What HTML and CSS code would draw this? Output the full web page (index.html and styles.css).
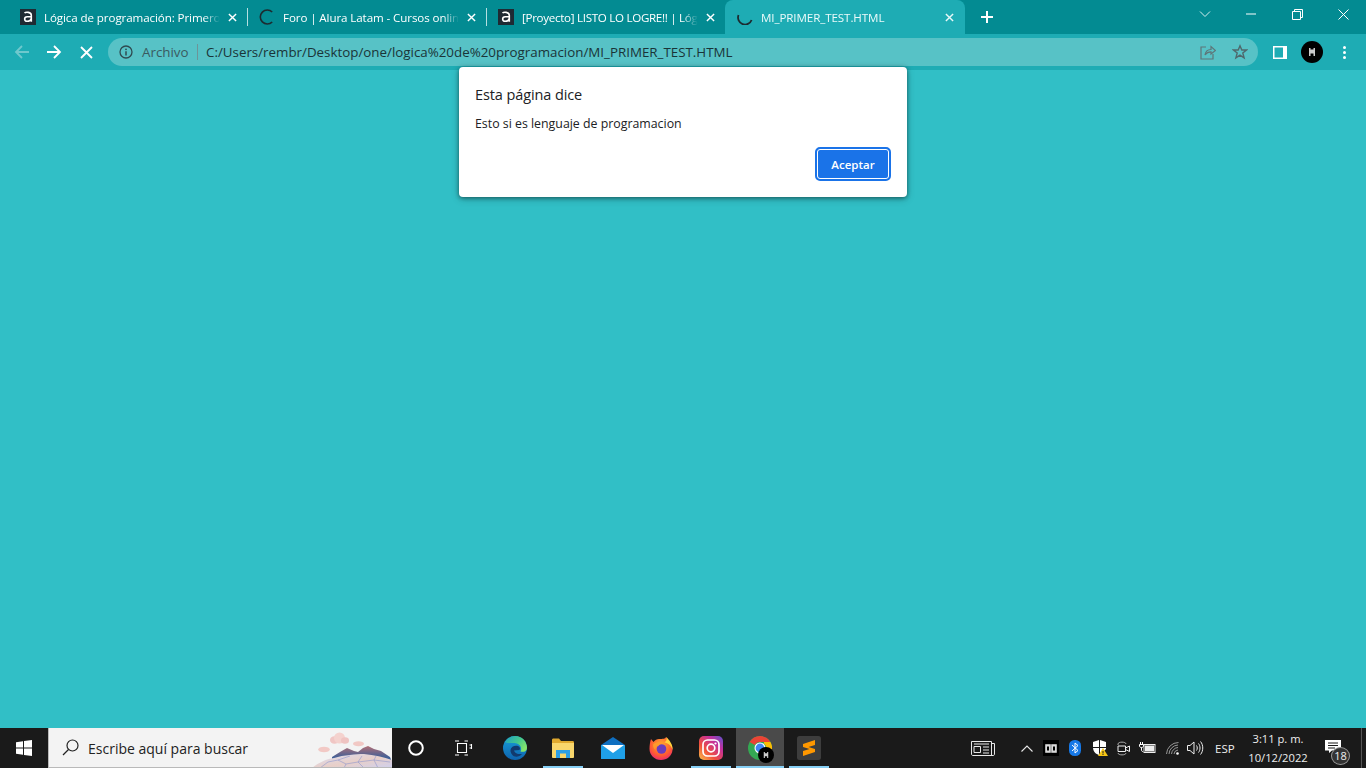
FILE: index.html
```html
<!DOCTYPE html>
<html lang="es">
<head>
<meta charset="utf-8">
<title>MI_PRIMER_TEST.HTML</title>
<link rel="stylesheet" href="styles.css">
</head>
<body>
<div class="browser">
  <div class="tabstrip">
    <div class="tab sep">
      <svg class="fav" viewBox="0 0 16 16"><rect width="16" height="16" fill="#1f2a33"/><path d="M4.500 4C5.500 3 11.300 2.500 11.300 6.200V12.800M11.300 7.700H7.200C3.800 7.700 3.800 12.300 7.200 12.300C9 12.300 10.700 11.300 11.300 9.500" fill="none" stroke="#fff" stroke-width="1.600"/></svg>
      <span class="title">Lógica de programación: Primeros pasos</span>
      <svg class="tclose" viewBox="0 0 10 10"><path d="M1 1L9 9M9 1L1 9" stroke="#fff" stroke-width="1.600"/></svg>
    </div>
    <div class="tab sep">
      <svg class="fav" viewBox="0 0 16 16"><path d="M13.200 3A7 7 0 1 0 13.200 13" fill="none" stroke="#1d2b30" stroke-width="1.600"/></svg>
      <span class="title">Foro | Alura Latam - Cursos online de tecnología</span>
      <svg class="tclose" viewBox="0 0 10 10"><path d="M1 1L9 9M9 1L1 9" stroke="#fff" stroke-width="1.600"/></svg>
    </div>
    <div class="tab">
      <svg class="fav" viewBox="0 0 16 16"><rect width="16" height="16" fill="#1f2a33"/><path d="M4.500 4C5.500 3 11.300 2.500 11.300 6.200V12.800M11.300 7.700H7.200C3.800 7.700 3.800 12.300 7.200 12.300C9 12.300 10.700 11.300 11.300 9.500" fill="none" stroke="#fff" stroke-width="1.600"/></svg>
      <span class="title caps">[Proyecto] LISTO LO LOGRE!! | Lógica de programación</span>
      <svg class="tclose" viewBox="0 0 10 10"><path d="M1 1L9 9M9 1L1 9" stroke="#fff" stroke-width="1.600"/></svg>
    </div>
    <div class="tab active">
      <svg class="fav" viewBox="0 0 16 16"><path d="M1.500 6A7 7 0 0 0 14.600 11" fill="none" stroke="#1d2b30" stroke-width="1.800"/></svg>
      <span class="title">MI_PRIMER_TEST.HTML</span>
      <svg class="tclose" viewBox="0 0 10 10"><path d="M1 1L9 9M9 1L1 9" stroke="#e8f8f8" stroke-width="1.600"/></svg>
    </div>
    <svg class="newtab" viewBox="0 0 12 12"><path d="M6 0V12M0 6H12" stroke="#fff" stroke-width="2"/></svg>
    <div class="winctl">
      <div class="wbtn"><svg width="12" height="8" viewBox="0 0 12 8"><path d="M1 1.500L6 6.500L11 1.500" fill="none" stroke="#d6eeef" stroke-width="1"/></svg></div>
      <div class="wbtn"><svg width="10" height="2" viewBox="0 0 10 2"><path d="M0 1H10" stroke="#fff" stroke-width="1"/></svg></div>
      <div class="wbtn"><svg width="11" height="11" viewBox="0 0 11 11"><path d="M.5 2.500H8.500V10.500H.5ZM2.500 2.500V.5H10.500V8.500H8.500" fill="none" stroke="#fff" stroke-width="1"/></svg></div>
      <div class="wbtn"><svg width="11" height="11" viewBox="0 0 11 11"><path d="M.5 .5L10.500 10.500M10.500 .5L.5 10.500" stroke="#fff" stroke-width="1"/></svg></div>
    </div>
  </div>

  <div class="toolbar">
    <div class="nav"><svg width="16" height="14" viewBox="0 0 16 14"><path d="M15 7H2M8 1L2 7L8 13" fill="none" stroke="#6fc8cd" stroke-width="1.800"/></svg></div>
    <div class="nav"><svg width="16" height="14" viewBox="0 0 16 14"><path d="M1 7H14M8 1L14 7L8 13" fill="none" stroke="#fff" stroke-width="1.800"/></svg></div>
    <div class="nav"><svg width="13" height="13" viewBox="0 0 13 13"><path d="M1 1L12 12M12 1L1 12" stroke="#fff" stroke-width="1.800"/></svg></div>
    <div class="omnibox">
      <svg class="info" viewBox="0 0 14 14"><circle cx="7" cy="7" r="6" fill="none" stroke="#2f4a50" stroke-width="1.300"/><path d="M7 6.200V10.500" stroke="#2f4a50" stroke-width="1.500"/><circle cx="7" cy="4.300" r=".9" fill="#2f4a50"/></svg>
      <span class="scheme">Archivo</span>
      <span class="divider"></span>
      <span class="url">C:/Users/rembr/Desktop/one/logica%20de%20programacion/MI_PRIMER_TEST.HTML</span>
      <svg class="share" viewBox="0 0 16 16"><path d="M6 3H1V15H13V10M5 11C5.500 7.500 8 5.500 11 5.500V2.500L15.500 6.500L11 10V7.800C8.500 7.800 6.500 8.800 5 11Z" fill="none" stroke="#5e7578" stroke-width="1.200"/></svg>
      <svg class="star" viewBox="0 0 16 16"><path d="M8 1.800L9.800 6H14.500L10.800 9L12.100 13.800L8 11.100L3.900 13.800L5.200 9L1.500 6H6.200Z" fill="none" stroke="#4f686c" stroke-width="1.400"/></svg>
    </div>
    <svg class="panel" viewBox="0 0 14 13"><rect width="14" height="13" fill="#fff"/><rect x="1.500" y="1.500" width="8.500" height="10" fill="#1eacb4"/></svg>
    <div class="avatar"><svg width="8" height="10" viewBox="0 0 8 10"><path d="M1 1H2.500V2.500H5.500V1H7V9H5.500V6.500H2.500V9H1Z" fill="#ccc"/></svg></div>
    <div class="menu"><i></i><i></i><i></i></div>
  </div>

  <div class="page"></div>
</div>

<div class="dialog">
  <h1 class="dlg-title">Esta página dice</h1>
  <p class="dlg-msg">Esto si es lenguaje de programacion</p>
  <div class="dlg-actions"><button class="dlg-ok">Aceptar</button></div>
</div>

<div class="taskbar">
  <div class="start"><svg width="16" height="16" viewBox="0 0 16 16"><path d="M0 2.300L7 1.300V7.500H0ZM8 1.100L16 0V7.500H8ZM0 8.500H7V14.700L0 13.700ZM8 8.500H16V16L8 14.900Z" fill="#fff"/></svg></div>
  <div class="search">
    <svg class="lens" width="17" height="17" viewBox="0 0 17 17"><circle cx="10.500" cy="6.500" r="5.500" fill="none" stroke="#222" stroke-width="1.200"/><path d="M6.500 10.500L1 16" stroke="#222" stroke-width="1.300"/></svg>
    <span class="search-text">Escribe aquí para buscar</span>
    <svg class="art" width="86" height="40" viewBox="0 0 86 40">
      <defs><linearGradient id="m1" x1="0" y1="0" x2="0" y2="1"><stop offset="0" stop-color="#b26f76"/><stop offset=".55" stop-color="#3b5f98"/><stop offset="1" stop-color="#2b5c9c"/></linearGradient>
      <linearGradient id="d1" x1="0" y1="0" x2="1" y2="1"><stop offset="0" stop-color="#d9dcf4"/><stop offset=".55" stop-color="#e8cfc8"/><stop offset="1" stop-color="#cfd0ee"/></linearGradient></defs>
      <ellipse cx="28.500" cy="12" rx="4.500" ry="3.800" fill="#f0c6c4"/><ellipse cx="33.500" cy="10" rx="5.500" ry="5.500" fill="#f4d2ce"/><ellipse cx="39" cy="12.500" rx="4" ry="3.200" fill="#efc3c1"/>
      <ellipse cx="18" cy="21.500" rx="5.800" ry="2.800" fill="#f2c9c5"/><ellipse cx="52.500" cy="15.800" rx="5.500" ry="2.500" fill="#f1c8c4"/>
      <path d="M26 29L34 24L41 20L48 23L52 24L57 20L62 18L68 21L75 23L84 29L86 34V40H26Z" fill="url(#m1)"/>
      <path d="M6 40C12 35 20 31 28 30C38 27 50 26 58 26C68 27 78 29 86 32V40Z" fill="url(#d1)"/>
      <path d="M14 40L22 34L32 32L40 36L38 40M32 32L44 28M40 36L52 34L58 40M52 34L56 28M52 34L68 32L72 40M68 32L70 28M68 32L84 34" fill="none" stroke="#8f97cf" stroke-width=".6"/>
    </svg>
  </div>
  <div class="task"><svg width="16" height="16" viewBox="0 0 16 16"><circle cx="8" cy="8" r="6.800" fill="none" stroke="#fff" stroke-width="2"/></svg></div>
  <div class="task"><svg width="18" height="16" viewBox="0 0 18 16"><path d="M2.500 3.500H11.500V12.500H2.500ZM0 1H4M9.500 1H13M0 15H4M9.500 15H13M14.500 5H17M14.500 8H17M16.500 4V9" fill="none" stroke="#fff" stroke-width="1.100"/></svg></div>
  <div class="task gap3"><svg width="24" height="24" viewBox="0 0 24 24"><defs><linearGradient id="e1" x1="0" y1="0" x2="0" y2="1"><stop offset="0" stop-color="#18a0d8"/><stop offset="1" stop-color="#0e62ae"/></linearGradient><linearGradient id="e2" x1="0" y1="0" x2="1" y2=".6"><stop offset="0" stop-color="#1c9fc6"/><stop offset=".6" stop-color="#45c98c"/><stop offset="1" stop-color="#84e36a"/></linearGradient></defs><circle cx="12" cy="12" r="12" fill="url(#e1)"/><path d="M2 6C5 1.500 9 0 12 0C19 0 24 5.500 24 12C24 15.500 20 16.500 17.500 15.500C19 13 18 9 14 7.500C9 6 4 8 2 6Z" fill="url(#e2)"/><path d="M7.500 14C8 10.500 12 9 15 10C17 10.800 17.500 12.500 16.500 14L11 14.500C12 17.500 15 18.500 19 18C16 21.500 11 21.500 9 18.500C8 17 7.300 15.500 7.500 14Z" fill="#123a6e"/></svg></div>
  <div class="task on"><svg width="22" height="20" viewBox="0 0 22 20"><path d="M0 2C0 1 .5.500 1.500.500H7L9 3H20.500C21.500 3 22 3.500 22 4.500V19H0Z" fill="#e0a92f"/><path d="M0 5H22V19C22 19.500 21.500 20 21 20H1C.5 20 0 19.500 0 19Z" fill="#f8d66c"/><path d="M4 12H18V20H14V15.500H8V20H4Z" fill="#2c9fe6"/></svg></div>
  <div class="task gap2"><svg width="24" height="24" viewBox="0 0 24 24"><path d="M0 9L12 1L24 9V22H0Z" fill="#0f6fc0"/><path d="M0 9H24V23H0Z" fill="#1fa0e8"/><path d="M1 9H23L12 17Z" fill="#fff"/></svg></div>
  <div class="task"><svg width="24" height="24" viewBox="0 0 24 24"><defs><radialGradient id="f1" cx=".5" cy=".35" r=".75"><stop offset="0" stop-color="#ffb02e"/><stop offset=".6" stop-color="#ff5b32"/><stop offset="1" stop-color="#e31587"/></radialGradient></defs><path d="M2 3L4.500 6C6 4 8 3 10 3C14 2.800 16 3 17 1C18.500 2.500 19 3 18 5C22 7 24 10 23.500 14C23 20 18 24 12 24C5.500 24 .5 19 .5 13C.5 9 1 6 2 3Z" fill="url(#f1)"/><path d="M17.500 1C20 4 24 8 23.500 14C22 9 18.500 7 15.500 6.500C17.500 5 18 3.500 17.500 1Z" fill="#ffd23b"/><circle cx="12.500" cy="13" r="4.800" fill="#6b3dbd"/><path d="M4 8.500C6 6 11 5.500 15 7.500C12 7.500 9.500 8.500 9.500 10C7.500 10 6 12 6.500 14C5 13 4 11 4 8.500Z" fill="#ff9a2b"/></svg></div>
  <div class="task gap2 on"><svg width="24" height="24" viewBox="0 0 24 24"><defs><linearGradient id="i1" x1="0" y1="1" x2="1" y2="0"><stop offset="0" stop-color="#fcc24a"/><stop offset=".35" stop-color="#f0503c"/><stop offset=".7" stop-color="#c32f9d"/><stop offset="1" stop-color="#5a55d0"/></linearGradient></defs><rect width="24" height="24" rx="5" fill="url(#i1)"/><rect x="4" y="4" width="16" height="16" rx="4.500" fill="none" stroke="#fff" stroke-width="1.700"/><circle cx="12" cy="12" r="3.800" fill="none" stroke="#fff" stroke-width="1.700"/><circle cx="16.500" cy="7.500" r="1.100" fill="#fff"/></svg></div>
  <div class="task gap1 current"><svg width="24" height="24" viewBox="0 0 24 24"><circle cx="12" cy="12" r="12" fill="#34a853"/><path d="M12 0A12 12 0 0 1 22.400 6H12A6 6 0 0 0 6.800 9L1.600 6A12 12 0 0 1 12 0Z" fill="#ea4335"/><path d="M22.400 6A12 12 0 0 1 12 24L17.200 15A6 6 0 0 0 16 7.500V6Z" fill="#fbbc05"/><circle cx="12" cy="12" r="5.500" fill="#fff"/><circle cx="12" cy="12" r="4.400" fill="#4285f4"/></svg><span class="badge"><svg width="6" height="8" viewBox="0 0 8 10"><path d="M1 1H2.500V2.500H5.500V1H7V9H5.500V6.500H2.500V9H1Z" fill="#ccc"/></svg></span></div>
  <div class="task gap1 on"><svg width="24" height="24" viewBox="0 0 24 24"><rect width="24" height="24" rx="2.500" fill="#3d3d3d"/><path d="M18 4V9L11.500 11L18 13V16L6 20V15L12.500 13L6 11V8Z" fill="#ff9800"/></svg></div>

  <div class="tray">
    <svg class="t-news" width="24" height="15" viewBox="0 0 24 15"><path d="M.5.500H20.500V14.500H2C1 14.500.5 14 .5 13ZM20.500 2.500H23.500V13C23.500 14 23 14.500 22 14.500H20M3 3H18M3 5.500H9.500V11.500H3ZM12 6H18M12 9H18M12 12H18" fill="none" stroke="#e8e8e8" stroke-width="1"/></svg>
    <svg class="t-up" width="12" height="7" viewBox="0 0 12 7"><path d="M.5 6.500L6 1L11.500 6.500" fill="none" stroke="#e8e8e8" stroke-width="1.100"/></svg>
    <span class="t-book"><svg width="12" height="9" viewBox="0 0 12 9"><path d="M.5 .5H5.500V8.500H.5ZM6.500 .5H11.500V8.500H6.500Z" fill="#d8d8d8" stroke="#d8d8d8" stroke-width=".6"/><rect x="2" y="2.500" width="2" height="4" fill="#000"/><rect x="8" y="2.500" width="2" height="4" fill="#000"/></svg></span>
    <svg class="t-bt" width="12" height="16" viewBox="0 0 12 16"><rect width="12" height="16" rx="5.500" fill="#1678e6"/><path d="M3 5L9 10.500L6 13V3L9 5.500L3 11" fill="none" stroke="#fff" stroke-width="1"/></svg>
    <svg class="t-shield" width="16" height="16" viewBox="0 0 16 16"><path d="M1 2L7 0V7H1ZM8 0L14 2V7H8ZM1 8H7V15C4 14 1.500 12 1 8ZM8 8H14V9L8 15Z" fill="#fff"/><path d="M11 8L16 16H6Z" fill="#f6c515"/><path d="M11 11V13.500M11 14V15" stroke="#222" stroke-width="1"/></svg>
    <svg class="t-cam" width="14" height="17" viewBox="0 0 14 17"><path d="M1 5V4C1 1.500 9 1.500 9 4M1 13V13C1 15.500 9 15.500 9 13" fill="none" stroke="#bbb" stroke-width=".9"/><path d="M1 6H8.500V11.500H1ZM8.500 8L12.500 6V11.500L8.500 9.500" fill="none" stroke="#eee" stroke-width="1"/></svg>
    <svg class="t-bat" width="17" height="12" viewBox="0 0 17 12"><path d="M1.500 0V2.500M3.500 0V2.500M.5 2.500H4.500V4C4.500 5 3.500 5.500 2.500 5.500C1.500 5.500 .5 5 .5 4ZM2.500 5.500V8C2.500 9 3 9.500 4 9.500" fill="none" stroke="#fff" stroke-width="1"/><rect x="5" y="2.500" width="11" height="8" fill="none" stroke="#eee"/><rect x="6" y="3.500" width="9" height="6" fill="#eee"/></svg>
    <svg class="t-wifi" width="15" height="13" viewBox="0 0 15 13"><path d="M.5 12A12 12 0 0 1 12.500 .5M3 12A9.500 9.500 0 0 1 12 3M5.500 12A7 7 0 0 1 12 5.500M8 12A4.500 4.500 0 0 1 12 8" fill="none" stroke="#b8b8b8" stroke-width=".8"/><circle cx="11.500" cy="11.500" r="1.300" fill="#fff"/></svg>
    <svg class="t-vol" width="17" height="14" viewBox="0 0 17 14"><path d="M.5 4.500H3L7 1V13L3 9.500H.5ZM9.500 4.500C10.500 6 10.500 8 9.500 9.500M11.500 2.500C13.500 5 13.500 9 11.500 11.500M13.500 .5C16.500 4 16.500 10 13.500 13.500" fill="none" stroke="#eee" stroke-width="1"/></svg>
    <span class="t-lang">ESP</span>
    <div class="t-clock"><span>3:11 p. m.</span><span>10/12/2022</span></div>
    <div class="t-notif"><svg width="16" height="13" viewBox="0 0 16 13"><path d="M0 0H16V10.500H7L4 13V10.500H0Z" fill="#fff"/><path d="M3 3H13M3 5.500H13M3 8H10" stroke="#1a1a1a" stroke-width="1"/></svg><span class="count">18</span></div>
    <span class="t-desk"></span>
  </div>
</div>
</body>
</html>
```
FILE: styles.css
```css
* { box-sizing: border-box; margin: 0; padding: 0; }
html, body { height: 100%; overflow: hidden; }
body { position: relative; display: flex; flex-direction: column; width: 1366px; height: 768px; font-family: "Open Sans", "Noto Sans", sans-serif; }
.browser { flex: 1; display: flex; flex-direction: column; min-height: 0; }

.tabstrip { height: 34px; flex: none; background: #038b92; display: flex; align-items: stretch; padding-left: 8px; }
.tab { position: relative; width: 239px; flex: none; display: flex; align-items: center; padding-left: 12px; color: #fff; font-size: 11.600px; letter-spacing: -.1px; }
.tab.sep::after { content: ""; position: absolute; right: -1px; top: 8px; height: 18px; width: 1px; background: #b5dfe1; }
.tab.active { background: #1eacb4; width: 240px; border-radius: 8px 8px 0 0; color: #eafafa; }
.fav { width: 16px; height: 16px; flex: none; }
.title { width: 176px; flex: none; margin-left: 8px; white-space: nowrap; overflow: hidden; -webkit-mask-image: linear-gradient(to right, #000 160px, transparent 176px); mask-image: linear-gradient(to right, #000 160px, transparent 176px); }
.title.caps { letter-spacing: -.3px; }
.tclose { width: 9px; height: 9px; flex: none; margin-left: 8px; }
.newtab { width: 12px; height: 12px; flex: none; align-self: center; margin-left: 16px; }
.winctl { margin-left: auto; display: flex; }
.wbtn { width: 46px; display: flex; align-items: center; justify-content: center; padding-bottom: 6px; }

.toolbar { height: 36px; flex: none; background: #1eacb4; display: flex; align-items: center; padding-left: 6px; }
.nav { width: 32px; height: 28px; flex: none; display: flex; align-items: center; justify-content: center; }
.omnibox { width: 1150px; height: 28px; flex: none; margin-left: 6px; background: #57c2c6; border-radius: 14px; display: flex; align-items: center; padding-left: 11px; font-size: 13.350px; color: #1a3438; }
.info { width: 14px; height: 14px; flex: none; }
.scheme { margin-left: 9px; width: 46px; flex: none; color: #3a5a5f; white-space: nowrap; }
.divider { width: 1px; height: 16px; flex: none; background: #6d9498; margin: 0 8px 0 9px; }
.url { white-space: nowrap; flex: 1; }
.share { width: 16px; height: 16px; flex: none; margin-right: 16px; }
.star { width: 16px; height: 16px; flex: none; margin-right: 10px; }
.panel { width: 14px; height: 13px; margin-left: 15px; flex: none; }
.avatar { width: 22px; height: 22px; border-radius: 50%; background: #000; margin-left: 14px; display: flex; align-items: center; justify-content: center; flex: none; }
.menu { margin-left: 20px; display: flex; flex-direction: column; gap: 2px; }
.menu i { width: 3px; height: 3px; border-radius: 50%; background: #fff; display: block; }

.page { flex: 1; background: #31bfc6; }

.dialog { position: absolute; left: 459px; top: 67px; width: 448px; height: 130px; background: #fff; border-radius: 4px; box-shadow: 0 1px 4px rgba(0,0,0,.45), 0 2px 8px rgba(0,0,0,.2); padding: 18px 16px 0; color: #202124; }
.dlg-title { font-size: 14.500px; font-weight: 400; line-height: 20px; letter-spacing: -.1px; }
.dlg-msg { font-size: 12.350px; line-height: 16px; margin-top: 11px; }
.dlg-actions { display: flex; justify-content: flex-end; margin-top: 15px; }
.dlg-ok { width: 76px; height: 34px; background: #1a73e8; color: #fff; border: 2px solid #1a73e8; outline: none; box-shadow: inset 0 0 0 1px #fff; border-radius: 5px; font: 600 11.500px "Open Sans", sans-serif; }

.taskbar { height: 40px; flex: none; background: #1a1a1a; display: flex; align-items: center; color: #eee; }
.start { width: 48px; height: 40px; flex: none; display: flex; align-items: center; justify-content: center; }
.search { position: relative; width: 344px; height: 40px; flex: none; background: #f3f3f3; border: 1px solid #b9b9b9; border-width: 0 0 1px 1px; display: flex; align-items: center; overflow: hidden; }
.lens { margin-left: 13px; flex: none; }
.search-text { margin-left: 9px; margin-top: 2px; font-size: 14px; color: #222; }
.art { position: absolute; right: 0; top: 0; }
.task { position: relative; width: 48px; height: 40px; flex: none; display: flex; align-items: center; justify-content: center; }
.task.gap3 { margin-left: 3px; }
.task.gap2 { margin-left: 2px; }
.task.gap1 { margin-left: 1px; }
.task.on::after { content: ""; position: absolute; left: 4px; right: 4px; bottom: 0; height: 2px; background: #86cff5; }
.task.current { background: #4a4a4a; }
.task.current::after { content: ""; position: absolute; left: 0; right: 0; bottom: 0; height: 2px; background: #86cff5; }
.badge { position: absolute; left: 22px; top: 19px; width: 16px; height: 16px; border-radius: 50%; background: #000; display: flex; align-items: center; justify-content: center; }

.tray { flex: 1; min-width: 0; display: flex; align-items: center; height: 40px; }
.tray > * { flex: none; }
.t-news { margin-left: 138px; }
.t-up { margin-left: 26px; }
.t-book { margin-left: 10px; width: 16px; height: 16px; background: #000; display: flex; align-items: center; justify-content: center; }
.t-bt { margin-left: 10px; }
.t-shield { margin-left: 11px; }
.t-cam { margin-left: 9px; }
.t-bat { margin-left: 8px; }
.t-wifi { margin-left: 10px; }
.t-vol { margin-left: 6px; }
.t-lang { margin-left: 11px; font-size: 11.500px; width: 28px; }
.t-clock { width: 70px; display: flex; flex-direction: column; align-items: center; font-size: 11.200px; line-height: 19px; }
.t-notif { position: relative; margin-left: 12px; width: 30px; height: 36px; padding-top: 10px; }
.t-notif svg { display: block; }
.count { position: absolute; left: 6px; top: 17px; width: 19px; height: 18px; border-radius: 50%; border: 1px solid #999; background: #333; font-size: 11px; line-height: 16px; text-align: center; color: #eee; }
.t-desk { width: 1px; height: 40px; margin-left: 6px; background: #555; }
```
